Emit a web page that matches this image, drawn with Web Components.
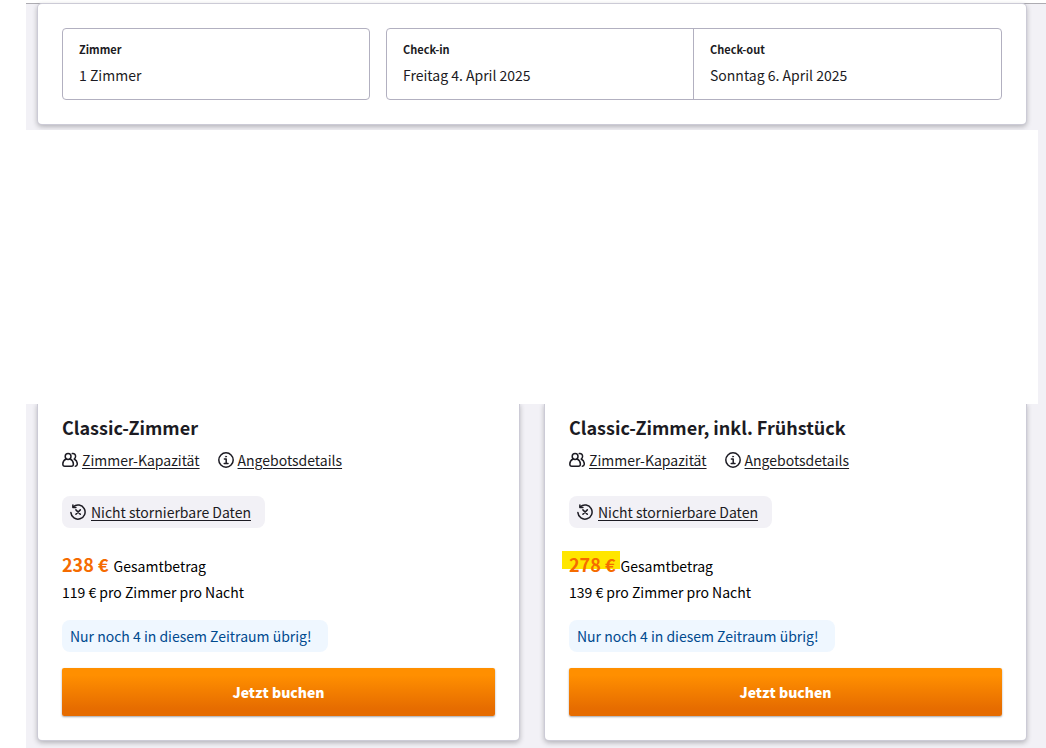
<!DOCTYPE html>
<html lang="de">
<head>
<meta charset="utf-8">
<meta name="viewport" content="width=device-width, initial-scale=1">
<title>Zimmer buchen</title>
<style>
    body {
        margin: 0;
        padding-left: 26px;
        background: #fff;
        color: #1c1b23;
        font-family: "Noto Sans CJK SC", "Noto Sans", sans-serif;
        font-size: 14px;
        line-height: 24px;
    }
</style>
</head>
<body>
<booking-page>
    <search-bar slot="search">
        <search-field label="Zimmer">1 Zimmer</search-field>
        <search-field slot="dates" label="Check-in">Freitag 4. April 2025</search-field>
        <search-field slot="dates" label="Check-out">Sonntag 6. April 2025</search-field>
    </search-bar>
    <room-offer price="238 €" nightly="119 € pro Zimmer pro Nacht" left="4">Classic-Zimmer</room-offer>
    <room-offer price="278 €" nightly="139 € pro Zimmer pro Nacht" left="4" highlight>Classic-Zimmer, inkl. Frühstück</room-offer>
</booking-page>

<script>
const ICONS = {
    guests: `
        <circle cx="6.1" cy="4.5" r="2.9"/>
        <path d="M4 7C1.800 8.200.8 9.800.8 12c0 1.500.7 2.300 2 2.300h6.600c1.300 0 2-.8 2-2.300 0-2.200-1-3.800-3.200-5"/>
        <path d="M10.300 1.600c1.900-.4 3.300.9 3.300 2.700 0 1.200-.5 2.100-1.400 2.700 2 1.100 3.100 2.700 3.100 4.700 0 1.500-.7 2.500-2 2.500"/>`,
    info: `
        <circle cx="8" cy="8" r="7.2"/>
        <path d="M6.400 7h1.800v4.300M6.200 11.400h3.800"/>
        <circle cx="8" cy="4.600" r=".6" fill="currentColor" stroke-width=".6"/>`,
    nocancel: `
        <path d="M3.300 2.700A7.100 7.100 0 1 1 .9 8.600"/>
        <path d="M2.900.9v2.500h3"/>
        <path d="M5.900 5.900l4.400 4.400M10.300 5.900l-4.400 4.400"/>`
};

class UiIcon extends HTMLElement {
    constructor() {
        super();
        this.attachShadow({ mode: 'open' });
    }

    connectedCallback() {
        this.shadowRoot.innerHTML = `
        <style>
            :host {
                display: block;
                flex: none;
                width: 16px;
                height: 16px;
            }

            svg {
                display: block;
                fill: none;
                stroke: currentColor;
                stroke-width: 1.5;
                stroke-linecap: round;
                stroke-linejoin: round;
            }
        </style>
        <svg width="16" height="16" viewBox="0 0 16 16" aria-hidden="true">${ICONS[this.getAttribute('name')]}</svg>
        `;
    }
}

class BookingPage extends HTMLElement {
    constructor() {
        super();
        this.attachShadow({ mode: 'open' });
    }

    connectedCallback() {
        this.shadowRoot.innerHTML = `
        <style>
            :host {
                display: block;
                min-height: 100vh;
                background: #f2f1f6;
            }

            header {
                height: 3px;
                background: #fff;
                border-bottom: 1px solid #adacb2;
            }

            .search {
                padding: 0 20px 6px 12px;
            }

            /* covers the upper part of the offer cards */
            .cover {
                position: relative;
                z-index: 1;
                height: 274px;
                margin-right: 8px;
                background: #fff;
            }

            main {
                display: grid;
                grid-template-columns: 1fr 1fr;
                gap: 26px;
                padding: 0 20px 8px 12px;
            }
        </style>
        <header></header>
        <div class="search"><slot name="search"></slot></div>
        <div class="cover"></div>
        <main><slot></slot></main>
        `;
    }
}

class SearchBar extends HTMLElement {
    constructor() {
        super();
        this.attachShadow({ mode: 'open' });
    }

    connectedCallback() {
        this.shadowRoot.innerHTML = `
        <style>
            :host {
                display: grid;
                grid-template-columns: 1fr 2fr;
                gap: 16px;
                padding: 24px;
                background: #fff;
                border-radius: 4px;
                box-shadow: 0 0 0 1px #cccbd6, 0 2px 5px 1px rgba(28, 27, 35, .28);
            }

            .group {
                display: grid;
                grid-auto-flow: column;
                grid-auto-columns: 1fr;
                border: 1px solid #b2b0c0;
                border-radius: 4px;
            }

            ::slotted([slot="dates"]:not(:last-child)) {
                border-right: 1px solid #b2b0c0;
            }
        </style>
        <div class="group"><slot></slot></div>
        <div class="group"><slot name="dates"></slot></div>
        `;
    }
}

class SearchField extends HTMLElement {
    constructor() {
        super();
        this.attachShadow({ mode: 'open' });
    }

    connectedCallback() {
        this.shadowRoot.innerHTML = `
        <style>
            :host {
                display: block;
            }

            button {
                display: flex;
                flex-direction: column;
                gap: 2px;
                width: 100%;
                padding: 10px 16px;
                border: 0;
                background: none;
                color: inherit;
                font: inherit;
                text-align: left;
                cursor: pointer;
            }

            .label {
                font-size: 11px;
                line-height: 20px;
                font-weight: 700;
            }

            .value {
                line-height: 28px;
            }
        </style>
        <button type="button">
            <span class="label">${this.getAttribute('label')}</span>
            <span class="value"><slot></slot></span>
        </button>
        `;
    }
}

class RoomOffer extends HTMLElement {
    constructor() {
        super();
        this.attachShadow({ mode: 'open' });
    }

    connectedCallback() {
        this.shadowRoot.innerHTML = `
        <style>
            :host {
                display: flex;
                flex-direction: column;
                align-items: flex-start;
                padding: 12px 24px 24px;
                background: #fff;
                border-radius: 0 0 4px 4px;
                box-shadow: 0 0 0 1px #cccbd6, 0 2px 5px 1px rgba(28, 27, 35, .28);
            }

            h2 {
                margin: 0 0 10px;
                font-size: 18px;
                line-height: 22px;
                font-weight: 700;
            }

            .links {
                display: flex;
                gap: 18px;
                margin-bottom: 24px;
            }

            .link {
                display: flex;
                align-items: center;
                gap: 4px;
            }

            a {
                color: inherit;
                text-underline-offset: 2px;
            }

            .pill {
                gap: 5px;
                padding: 4px 14px 4px 8px;
                border-radius: 8px;
                background: #f2f1f6;
            }

            .total {
                display: flex;
                align-items: baseline;
                gap: 5px;
                margin-top: 22px;
                line-height: 28px;
                color: #000;
            }

            .price {
                position: relative;
                z-index: 0;
                font-size: 18px;
                font-weight: 700;
                color: #f56b00;
            }

            :host([highlight]) .price::before {
                content: "";
                position: absolute;
                z-index: -1;
                inset: 1px -4px 9px -7px;
                background: #ffe600;
            }

            .nightly {
                color: #000;
            }

            .left {
                margin: 16px 0;
                padding: 4px 16px 4px 8px;
                border-radius: 8px;
                background: #eff7ff;
                color: #004a8f;
            }

            button {
                align-self: stretch;
                height: 48px;
                padding: 0;
                border: 0;
                border-radius: 2px;
                background: linear-gradient(#ff8f00 15%, #e66c00 85%);
                box-shadow: 0 1px 2px rgba(28, 27, 35, .4);
                color: #fff;
                font: inherit;
                font-weight: 900;
                cursor: pointer;
            }
        </style>
        <h2><slot></slot></h2>
        <div class="links">
            <span class="link"><ui-icon name="guests"></ui-icon><a href="#kapazitaet">Zimmer-Kapazität</a></span>
            <span class="link"><ui-icon name="info"></ui-icon><a href="#details">Angebotsdetails</a></span>
        </div>
        <span class="link pill"><ui-icon name="nocancel"></ui-icon><a href="#storno">Nicht stornierbare Daten</a></span>
        <div class="total"><span class="price">${this.getAttribute('price')}</span><span>Gesamtbetrag</span></div>
        <div class="nightly">${this.getAttribute('nightly')}</div>
        <div class="left">Nur noch ${this.getAttribute('left')} in diesem Zeitraum übrig!</div>
        <button type="button">Jetzt buchen</button>
        `;
    }
}

customElements.define('ui-icon', UiIcon);
customElements.define('booking-page', BookingPage);
customElements.define('search-bar', SearchBar);
customElements.define('search-field', SearchField);
customElements.define('room-offer', RoomOffer);
</script>
</body>
</html>
